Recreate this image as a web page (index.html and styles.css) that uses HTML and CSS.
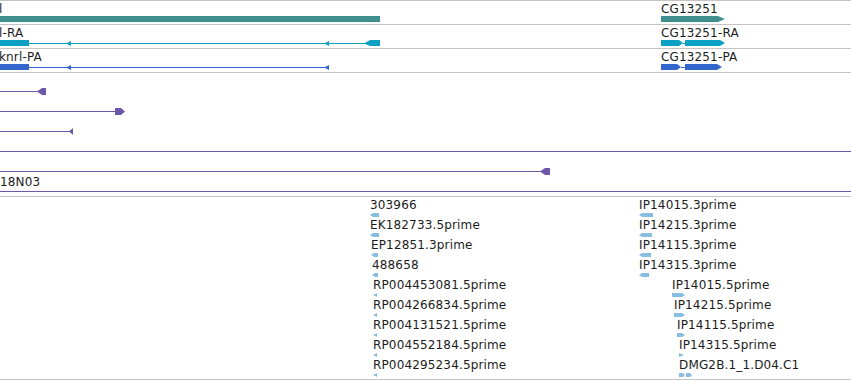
FILE: index.html
```html
<!DOCTYPE html>
<html lang="en">
<head>
    <meta charset="UTF-8">
    <title>Genome browser tracks</title>
    <link rel="stylesheet" href="styles.css">
</head>
<body>
    <!-- gene track -->
    <div class="track track-gene">
        <span class="label" style="left:-21px">knrl</span>
        <span class="label" style="left:661px">CG13251</span>
        <svg class="glyphs" width="851" height="6" viewBox="0 0 851 6">
            <rect class="gene" x="0" y="0" width="380" height="6"/>
            <polygon class="gene" points="661,0 718,0 725,3 718,6 661,6"/>
        </svg>
    </div>

    <!-- mRNA track -->
    <div class="track track-gene">
        <span class="label" style="left:-21px">knrl-RA</span>
        <span class="label" style="left:661px">CG13251-RA</span>
        <svg class="glyphs" width="851" height="6" viewBox="0 0 851 6">
            <g class="mrna">
                <rect x="0" y="0" width="29" height="6"/>
                <rect x="29" y="3" width="336" height="1"/>
                <polygon points="66,3.5 71,1 71,6"/>
                <polygon points="324,3.5 329,1 329,6"/>
                <polygon points="364,3.5 370,0 380,0 380,6 370,6"/>
                <polygon points="661,0 679,0 683,3 679,6 661,6"/>
                <rect x="683" y="3" width="2" height="1"/>
                <polygon points="685,0 720,0 725,3 720,6 685,6"/>
            </g>
        </svg>
    </div>

    <!-- protein track -->
    <div class="track track-gene">
        <span class="label" style="left:-1px">knrl-PA</span>
        <span class="label" style="left:661px">CG13251-PA</span>
        <svg class="glyphs" width="851" height="6" viewBox="0 0 851 6">
            <g class="cds">
                <rect x="0" y="0" width="29" height="6"/>
                <rect x="29" y="3" width="298" height="1"/>
                <polygon points="66,3.5 71,1 71,6"/>
                <polygon points="324,3.5 329,1 329,6"/>
                <polygon points="661,0 677,0 681,3 677,6 661,6"/>
                <rect x="681" y="3" width="4" height="1"/>
                <polygon points="685,0 717,0 722,3 717,6 685,6"/>
            </g>
        </svg>
    </div>

    <!-- clone track -->
    <div class="track track-clone">
        <svg class="canvas" width="851" height="123" viewBox="0 0 851 123">
            <g class="clone">
                <rect x="0" y="18" width="40" height="1"/>
                <polygon points="37,18.5 42,15 46,15 46,22 42,22"/>
                <rect x="0" y="38" width="116" height="1"/>
                <polygon points="115,35 121,35 125,38.5 121,42 115,42"/>
                <rect x="0" y="58" width="70" height="1"/>
                <polygon points="69,58.5 73,55 73,62"/>
                <rect x="0" y="78" width="851" height="1"/>
                <rect x="0" y="98" width="541" height="1"/>
                <polygon points="540,98.5 545,95 550,95 550,102 545,102"/>
                <rect x="0" y="118" width="851" height="1"/>
            </g>
        </svg>
        <span class="label" style="left:0;top:103px">18N03</span>
    </div>

    <!-- EST track -->
    <div class="track track-est">
        <div class="est" style="left:370px;top:0">
            <span class="name">303966</span>
            <svg width="9" height="4"><polygon points="0,2 3,0 9,0 9,4 3,4"/></svg>
        </div>
        <div class="est" style="left:370px;top:20px">
            <span class="name">EK182733.5prime</span>
            <svg width="9" height="4"><polygon points="0,2 3,0 9,0 9,4 3,4"/></svg>
        </div>
        <div class="est" style="left:371px;top:40px">
            <span class="name">EP12851.3prime</span>
            <svg width="7" height="4"><polygon points="0,2 3,0 7,0 7,4 3,4"/></svg>
        </div>
        <div class="est" style="left:372px;top:60px">
            <span class="name">488658</span>
            <svg width="6" height="4"><polygon points="0,2 3,0 6,0 6,4 3,4"/></svg>
        </div>
        <div class="est" style="left:373px;top:80px">
            <span class="name">RP004453081.5prime</span>
            <svg width="4" height="4"><polygon points="0,2 4,0 4,4"/></svg>
        </div>
        <div class="est" style="left:373px;top:100px">
            <span class="name">RP004266834.5prime</span>
            <svg width="4" height="4"><polygon points="0,2 4,0 4,4"/></svg>
        </div>
        <div class="est" style="left:373px;top:120px">
            <span class="name">RP004131521.5prime</span>
            <svg width="4" height="4"><polygon points="0,2 4,0 4,4"/></svg>
        </div>
        <div class="est" style="left:373px;top:140px">
            <span class="name">RP004552184.5prime</span>
            <svg width="4" height="4"><polygon points="0,2 4,0 4,4"/></svg>
        </div>
        <div class="est" style="left:373px;top:160px">
            <span class="name">RP004295234.5prime</span>
            <svg width="4" height="4"><polygon points="0,2 4,0 4,4"/></svg>
        </div>

        <div class="est" style="left:639px;top:0">
            <span class="name">IP14015.3prime</span>
            <svg width="14" height="4"><polygon points="0,2 3,0 14,0 14,4 3,4"/></svg>
        </div>
        <div class="est" style="left:639px;top:20px">
            <span class="name">IP14215.3prime</span>
            <svg width="13" height="4"><polygon points="0,2 3,0 13,0 13,4 3,4"/></svg>
        </div>
        <div class="est" style="left:639px;top:40px">
            <span class="name">IP14115.3prime</span>
            <svg width="12" height="4"><polygon points="0,2 3,0 12,0 12,4 3,4"/></svg>
        </div>
        <div class="est" style="left:639px;top:60px">
            <span class="name">IP14315.3prime</span>
            <svg width="10" height="4"><polygon points="0,2 3,0 10,0 10,4 3,4"/></svg>
        </div>
        <div class="est" style="left:672px;top:80px">
            <span class="name">IP14015.5prime</span>
            <svg width="13" height="4"><polygon points="0,0 10,0 13,2 10,4 0,4"/></svg>
        </div>
        <div class="est" style="left:674px;top:100px">
            <span class="name">IP14215.5prime</span>
            <svg width="11" height="4"><polygon points="0,0 8,0 11,2 8,4 0,4"/></svg>
        </div>
        <div class="est" style="left:677px;top:120px">
            <span class="name">IP14115.5prime</span>
            <svg width="8" height="4"><polygon points="0,0 5,0 8,2 5,4 0,4"/></svg>
        </div>
        <div class="est" style="left:679px;top:140px">
            <span class="name">IP14315.5prime</span>
            <svg width="5" height="4"><polygon points="0,0 5,2 0,4"/></svg>
        </div>
        <div class="est" style="left:679px;top:160px">
            <span class="name">DMG2B.1_1.D04.C1</span>
            <svg width="13" height="4">
                <polygon points="0,0 4,0 6,2 4,4 0,4"/>
                <polygon points="7,0 11,0 13,2 11,4 7,4"/>
            </svg>
        </div>
    </div>
</body>
</html>
```

FILE: styles.css
```css
/* Base */
html, body {
    margin: 0;
    padding: 0;
    background-color: #fff;
}

body {
    width: 851px;
    height: 380px;
    overflow: hidden;
    font-family: "DejaVu Sans", sans-serif;
    font-size: 12px;
    letter-spacing: 0.15px;
    color: #1c1c1c;
}

/* Tracks */
.track {
    position: relative;
    border-top: 1px solid #c4c4c4;
    overflow: hidden;
}

.track-gene {
    height: 23px;
}

.track-clone {
    height: 123px;
}

.track-est {
    height: 182px;
    border-bottom: 1px solid #c4c4c4;
}

.label {
    position: absolute;
    top: 2px;
    line-height: 12px;
    white-space: nowrap;
}

.glyphs {
    position: absolute;
    left: 0;
    top: 15px;
    display: block;
}

.canvas {
    position: absolute;
    left: 0;
    top: 0;
    display: block;
}

/* Feature colours */
.gene {
    fill: #418e8f;
}

.mrna {
    fill: #0aa1c2;
}

.cds {
    fill: #3366cc;
}

.clone {
    fill: #6d57a9;
}

/* ESTs */
.est {
    position: absolute;
    display: flex;
    flex-direction: column;
    align-items: flex-start;
    padding-top: 2px;
}

.est .name {
    line-height: 12px;
    white-space: nowrap;
}

.est svg {
    display: block;
    margin-top: 2px;
    fill: #88bde2;
}
```
